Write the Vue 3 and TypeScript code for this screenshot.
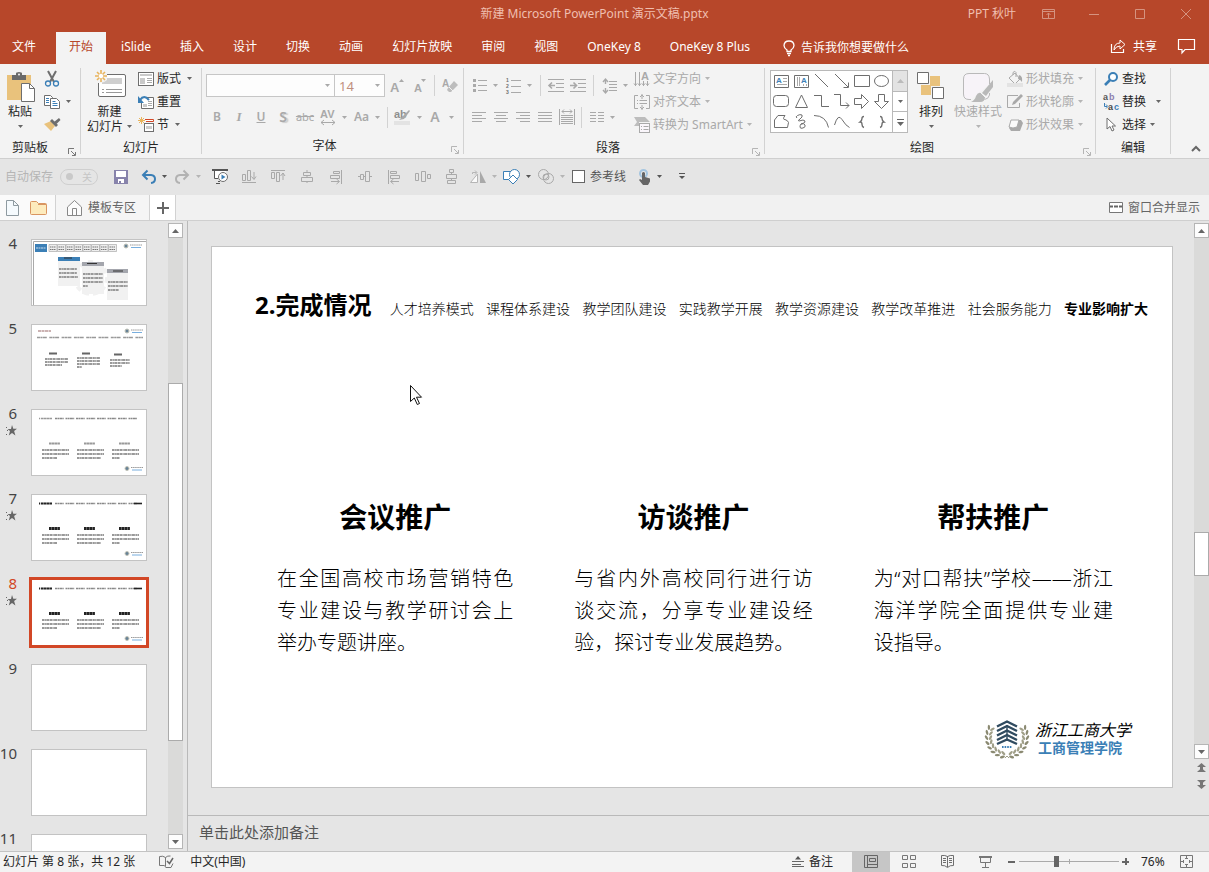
<script setup lang="ts">
import { h, ref } from 'vue'

type IconDef = [number, number, string]

const G = '#a9a9a9'
const D = '#6e6e6e'
const B = '#3b7fb6'

const g = (body: string, color = G) => `<g fill="none" stroke="${color}">${body}</g>`
const letter = (x: number, y: number, size: number, text: string, fill: string) =>
  `<text x="${x}" y="${y}" font-size="${size}" font-weight="600" fill="${fill}" stroke="none" font-family="Liberation Sans, sans-serif">${text}</text>`

// Laurel leaves placed in two rings around the emblem's centre
const laurel = (): string => {
  let out = ''
  for (let i = 0; i < 8; i++) {
    for (const side of [-1, 1]) {
      const a = ((-28 + i * 15) * Math.PI) / 180
      for (const [r, tilt, fill] of [[20.5, 30, '#8b8a72'], [16.5, -30, '#a09f88']] as const) {
        const x = 22 + side * r * Math.cos(a)
        const y = 18 + r * Math.sin(a)
        const rot = side * ((a * 180) / Math.PI + 90 + tilt)
        out += `<ellipse cx="${x.toFixed(1)}" cy="${y.toFixed(1)}" rx="2.600" ry="1.200" fill="${fill}" transform="rotate(${rot.toFixed(0)} ${x.toFixed(1)} ${y.toFixed(1)})"/>`
      }
    }
  }
  return out
}

const icons: Record<string, IconDef> = {
  drop: [5, 3, '<path d="M0 0h5L2.5 3z" fill="currentColor"/>'],
  up: [7, 4, '<path d="M0 4h7L3.5 0z" fill="currentColor"/>'],
  down: [7, 4, '<path d="M0 0h7L3.5 4z" fill="currentColor"/>'],
  more: [7, 7, '<path d="M0 0h7v1H0zM0 3h7L3.5 7z" fill="currentColor"/>'],
  launcher: [8, 8, '<path d="M.5 6V.5H6M3 3l4 4M7.500 4v3.500H4" fill="none" stroke="currentColor"/>'],
  collapse: [10, 6, '<path d="M1 5l4-4 4 4" fill="none" stroke="#666" stroke-width="2"/>'],
  paste: [29, 30, '<path d="M0 3h24v25H0z" fill="#e9c27c"/><path d="M5 3h4V1.500Q9 0 12 0t3 1.500V3h4v5H5z" fill="#6a6a6a"/><circle cx="12" cy="2.500" r="1" fill="#f3f3f3"/><path d="M14.500 11.500h8l5 5v13h-13z" fill="#fff" stroke="#6e6e6e"/><path d="M22.500 11.500v5h5" fill="none" stroke="#6e6e6e"/>'],
  cut: [16, 16, `<path d="M4 0l6 11M12 0L6 11" stroke="${D}" stroke-width="2" fill="none"/><circle cx="4" cy="12.500" r="2.500" fill="none" stroke="${B}" stroke-width="1.300"/><circle cx="12" cy="12.500" r="2.500" fill="none" stroke="${B}" stroke-width="1.300"/>`],
  copy: [16, 14, `<g fill="#fff" stroke="${D}"><path d="M.5.5h6l2 2v8h-8z"/><path d="M6.500 3.500h6l3 3v7h-9z"/></g><path d="M2 3.500h3M2 5.500h3M2 7.500h3M8.500 6.500h3M8.500 8.500h5M8.500 10.500h5" stroke="${B}"/>`],
  brush: [17, 15, `<path d="M0 7l7-3 4 5-4 5z" fill="#e9c27c"/><path d="M6 4l2-2 6 6-2 2z" fill="${D}"/><path d="M10 5l5-4 1.500 2-4 4z" fill="${D}"/>`],
  newslide: [32, 28, `<rect x="4.500" y="4.500" width="27" height="22" rx="1.500" fill="#fff" stroke="${D}"/><path d="M8 8h20v6H8z" fill="#cfcfcf"/><path d="M8 19.500h2M12 19.500h16M8 22.500h2M12 22.500h16" stroke="#999"/><path d="M0 0h13v10q-3 3-7 3H0z" fill="#f3f3f3"/><path d="M7 0v12M1 6h12M3 2l8 8M11 2l-8 8" stroke="#e9b45c" stroke-width="1.600"/><circle cx="7" cy="6" r="2.200" fill="#fff"/>`],
  layout: [16, 14, `<rect x=".5" y=".5" width="15" height="13" fill="#fff" stroke="${D}"/><path d="M2 2h12v2H2zM2 6h5v6H2z" fill="#c9c9c9"/><path d="M9 6.500h5M9 8.500h5M9 10.500h5" stroke="#aaa"/>`],
  reset: [16, 14, `<path d="M3.500 6v7.500h12V2.500H9" fill="#fff" stroke="${D}"/><path d="M5 9h4v3H5z" fill="#c9c9c9"/><path d="M10 6.500h4M10 8.500h4M10 10.500h4" stroke="#aaa"/><path d="M2 5Q6-1 11 5" fill="none" stroke="${B}" stroke-width="2"/><path d="M0 1v7h6z" fill="${B}"/>`],
  section: [16, 15, `<path d="M3.500 0v7M0 3.500h7M1 1l5 5M6 1L1 6" stroke="#e9b45c"/><path d="M7 2.500h8.500v2H8" fill="#fff" stroke="#d24726"/><rect x="6.500" y="6.500" width="9" height="8" fill="#fff" stroke="${D}"/><path d="M8 9h6v3H8z" fill="#ccc"/>`],
  grow: [14, 14, letter(0, 13, 13, 'A', G) + `<path d="M9 3h5l-2.500-3z" fill="${G}"/>`],
  shrink: [12, 14, letter(0, 13, 11, 'A', G) + `<path d="M7 0h5L9.500 3z" fill="${G}"/>`],
  clear: [16, 16, letter(0, 9, 10, 'A', G) + '<path d="M6 10l6-7 4 4-7 7H7l-2-2z" fill="#bdbdbd"/><path d="M7 9l4 4" stroke="#f3f3f3"/>'],
  spacingAV: [16, 16, letter(0, 9, 11, 'AV', G) + g('<path d="M1 13.500h14M4 11l-3 2.500L4 16M12 11l3 2.500-3 2.500"/>')],
  highlight: [17, 16, letter(0, 9, 11, 'ab', '#8f8f8f') + `<path d="M15 1L8 8l-3 3 5-1 6-8z" fill="${G}"/><path d="M0 12h16v4H0z" fill="#e3e3e3"/>`],
  bullets: [14, 15, `<path d="M0 1h3v3H0zM0 6h3v3H0zM0 11h3v3H0z" fill="${G}"/>` + g('<path d="M5 2.500h9M5 7.500h9M5 12.500h9"/>')],
  numbers: [15, 18, letter(0, 5, 5, '1', D) + letter(0, 11, 5, '2', D) + letter(0, 17, 5, '3', D) + g('<path d="M5 3.500h10M5 9.500h10M5 15.500h10"/>')],
  outdent: [16, 14, g('<path d="M0 .5h16M8 4.500h8M8 8.500h8M0 12.500h16"/><path d="M7 6.500H1M4 3.500l-3 3 3 3" stroke-width="1.600"/>')],
  indent: [16, 14, g('<path d="M0 .5h16M8 4.500h8M8 8.500h8M0 12.500h16"/><path d="M0 6.500h6M3.500 3.500l3 3-3 3" stroke-width="1.600"/>')],
  lineheight: [15, 16, g('<path d="M3.500 1v5M1 4l2.500-3L6 4M3.500 10v5M1 12l2.500 3L6 12" stroke-width="1.400"/><path d="M7 3.500h8M7 6.500h8M7 9.500h8M7 12.500h8"/>')],
  left: [14, 11, g('<path d="M0 .5h14M0 3.500h10M0 6.500h14M0 9.500h10"/>')],
  center: [14, 11, g('<path d="M0 .5h14M2 3.500h10M0 6.500h14M2 9.500h10"/>')],
  right: [14, 11, g('<path d="M0 .5h14M4 3.500h10M0 6.500h14M4 9.500h10"/>')],
  justify: [14, 11, g('<path d="M0 .5h14M0 3.500h14M0 6.500h14M0 9.500h14"/>')],
  distribute: [16, 16, g('<path d="M.5 0v16M15.500 0v16M3 2.500h10M5 .5l-2 2 2 2M11 .5l2 2-2 2M2 6.500h12M2 8.500h12M2 10.500h12M2 12.500h12M2 14.500h12"/>')],
  columns: [14, 11, g('<path d="M0 .5h6M0 3.500h6M0 6.500h6M0 9.500h6M8 .5h6M8 3.500h6M8 6.500h6M8 9.500h6"/>')],
  textdir: [16, 16, g('<path d="M1.500 1v14M5.500 1v14M9.500 10v5M13.500 10v5M0 12.500l1.500 2 1.500-2M4 12.500l1.500 2 1.500-2M8 12.500l1.500 2 1.500-2M12 12.500l1.500 2 1.500-2"/>') + letter(7, 9, 11, 'A', G)],
  aligntext: [16, 16, g('<path d="M4 1.500H.5v13H4M12 1.500h3.500v13H12M8 0v5M6 3l2-2 2 2M8 16v-5M6 13l2 2 2-2M3 6.500h1M5.500 6.500H13M3 9.500h1M5.500 9.500H13"/>')],
  smartart: [16, 16, `<path d="M0 0h11l5 5H5V9H0l3-4z" fill="#bdbdbd"/><rect x="5.500" y="6.500" width="10" height="9" fill="#faf6fb" stroke="${G}"/>` + g('<path d="M7 9.500h1M9.500 9.500h5M7 12.500h1M9.500 12.500h5"/>')],
  arrange: [28, 28, `<path d="M13 4h10v10H13zM4 13h10v10H4z" fill="#e9c27c"/><g fill="#fff" stroke="${D}"><path d="M.5.5h11v11H.5zM15.500 15.500h11v11h-11z"/></g>`],
  quick: [30, 31, '<path d="M8 27.500H6Q.5 27.500.5 22V7Q.5 1.500 6 1.500h15.500Q26 1.500 26.500 7v5M26.500 21v2q-1 4-5 4.500" fill="#f7f3f8" stroke="#b9b9b9"/><path d="M30 8v7l-7 9-4-3z" fill="#b9b9b9"/><path d="M18 21l4 4q0 5-5 5H8q4-2 5-6 2-4 5-3z" fill="#b9b9b9"/><path d="M17 20l5 5" stroke="#f3f3f3"/>'],
  fill: [16, 16, g('<path d="M2 7l6-5 5 6-5 5zM6 4V1.500q2-2.500 3 0V6"/>') + `<path d="M12 4q4 1 3 7-2-3-4-3z" fill="${G}"/><path d="M0 12h16v4H0z" fill="#e3e3e3"/>`],
  outline: [16, 15, g('<path d="M11 1.500H.5v12h12V9"/>') + `<path d="M14 0l2 2-8 8-3 1 1-3z" fill="${G}"/>`],
  effect: [16, 14, `<path d="M2 10L5 2h9l2 3-3 8H4z" fill="${G}"/><path d="M2 9l2-7h8l-2 7q-4 2-8 0z" fill="#fafafa" stroke="${G}"/>`],
  find: [15, 14, `<circle cx="9" cy="5" r="4" fill="#fff" stroke="${B}" stroke-width="2"/><path d="M6 8l-5 5" stroke="${B}" stroke-width="2.600"/>`],
  replace: [16, 19, letter(0, 8, 9, 'a', '#555') + letter(6, 8, 9, 'b', '#8c7fae') + letter(5, 18, 9, 'a', '#444') + letter(11, 18, 9, 'c', B) + `<path d="M1.500 11v3.500H4M3 12.500l2 2-2 2" stroke="${B}" fill="none"/>`],
  select: [10, 15, `<path d="M1 1v11l3-2.500 2 4.500 2-1-2-4h3.500z" fill="#fff" stroke="${D}"/>`],
  bulb: [12, 16, '<g fill="none" stroke="#fff" stroke-width="1.300"><path d="M4 11.500V10Q1 8 1 5.500 1.200 1 6 1t5 4.500Q11 8 8 10v1.500z"/><path d="M4 13.500h4M5 15.500h2"/></g>'],
  share: [16, 15, '<path d="M1.500 5v8.500h12V10" fill="none" stroke="#fff" stroke-width="1.200"/><path d="M4 11q0-7 6-7V1l5 4.500L10 10V7Q6 7 4 11z" fill="none" stroke="#fff"/>'],
  comment: [17, 15, '<path d="M.5.5h16v10H7l-3 3.500v-3.500H.5z" fill="none" stroke="#fff" stroke-width="1.200"/>'],
  ribbonopt: [13, 10, '<path d="M.5.5h12v9H.5zM.5 2.500h12M6.500 9V4M4.500 6l2-2 2 2" fill="none" stroke="#d59380"/>'],
  min: [10, 10, '<path d="M0 5.500h10" stroke="#d59380"/>'],
  max: [10, 10, '<path d="M.5.5h9v9h-9z" fill="none" stroke="#d59380"/>'],
  close: [10, 10, '<path d="M0 0l10 10M10 0L0 10" stroke="#d59380"/>'],
  save: [14, 14, '<path d="M0 0h14v14H0z" fill="#8783ab"/><path d="M2 1h10v6H2zM4 9h6v4H4z" fill="#fff"/><path d="M5 11h2v2H5z" fill="#8783ab"/>'],
  undo: [15, 14, `<path d="M2 5h8q4 .5 4 4t-4 4" fill="none" stroke="${B}" stroke-width="2"/><path d="M6.500.5L2 5l4.500 4.500" fill="none" stroke="${B}" stroke-width="2"/>`],
  redo: [15, 14, '<path d="M13 5H5Q1 5.500 1 9t4 4" fill="none" stroke="#b2b2b2" stroke-width="2"/><path d="M8.500.5L13 5 8.500 9.500" fill="none" stroke="#b2b2b2" stroke-width="2"/>'],
  play: [16, 15, `<path d="M0 0h16v2H0z" fill="#555"/><path d="M2.500 2v7.500H6M6 12.500h2M4 14.500h4" stroke="#555" fill="none"/><path d="M3 2h11v7H3z" fill="#fff"/><circle cx="11" cy="8" r="4.500" fill="#fff" stroke="${D}"/><path d="M9.500 5.500L13.500 8l-4 2.500z" fill="${B}"/>`],
  q1: [14, 13, g('<path d="M.5 4.500h3v6h-3zM5.500.5h3v10h-3zM0 12.500h14M12 2v7M9.500 6.500L12 9.500l2-3"/>')],
  q2: [14, 13, g('<path d="M0 .5h14M.5 2.500h3v6h-3zM5.500 2.500h3v9h-3zM12 10V3M9.500 6L12 3l2 3"/>')],
  q3: [12, 13, g('<path d="M6 0v2M2.500 2.500h7v3h-7zM6 6v2M.5 7.500h11v4H.5zM6 12v1"/>')],
  q4: [12, 14, g('<path d="M11.500 0v14M3.500 1.500h6v2h-6zM.5 5.500h9v3h-9zM1 11.500h8M6.500 9l3 2.500-3 2.500"/>')],
  q5: [14, 12, g('<path d="M0 5.500h2M2.500 3.500h3v5h-3zM6 5.500h1M7.500.5h4v10h-4zM12 5.500h2"/>')],
  q6: [12, 14, g('<path d="M.5 0v14M2.500 1.500h6v2h-6zM2.500 5.500h9v3h-9zM3 11.500h8M5.500 9l-3 2.500 3 2.500"/>')],
  q7: [16, 12, g('<path d="M.5 2.500h3v7h-3zM6.500.5h4v10h-4zM12.500 3.500h3v4h-3z"/>')],
  q8: [11, 15, g('<path d="M3.500.5h4v3h-4zM5.500 4v1M.5 5.500h10v4H.5zM5.500 10v1M1.500 11.500h8v3h-8z"/>')],
  flip: [16, 13, `<path d="M7.500 4v8.500h-7z" fill="#fafafa" stroke="#b5b5b5"/><path d="M2.500 4V2.500h4M5 .5l2 2-2 2" fill="none" stroke="#b5b5b5"/><path d="M10 1l6 12h-6z" fill="${G}"/>`],
  shapes: [17, 15, `<path d="M.5 2.500h11v8H.5z" fill="#fff" stroke="${B}"/><circle cx="11.500" cy="5.500" r="5" fill="#fff" stroke="${B}"/><path d="M10 6l4.500 4.500L10 15l-4.500-4.500z" fill="#fff" stroke="${B}"/>`],
  merge: [16, 15, g('<circle cx="5.500" cy="5.500" r="5"/><circle cx="10.500" cy="9.500" r="5"/><circle cx="8" cy="8" r="3"/>')],
  touch: [13, 16, `<circle cx="5.500" cy="4.500" r="3.500" fill="none" stroke="#a4c5e0" stroke-width="2"/><path d="M4 4q1.500-2 3 0v4l5 1.500v3L10 16H5l-4-5 1-1 2 1z" fill="#666"/>`],
  custom: [7, 7, '<path d="M1 .5h6" stroke="#555"/><path d="M1 3h6L4 6z" fill="#555"/>'],
  file: [13, 16, '<path d="M.5.5h7l5 5v10H.5z" fill="#f5fafd" stroke="#8e9aa0"/><path d="M7.500.5v5h5" fill="none" stroke="#8e9aa0"/>'],
  folder: [17, 14, '<path d="M1.500.5h5l2 2h7q1 0 1 1v9q0 1-1 1h-14q-1 0-1-1v-11q0-1 1-1z" fill="#fdebbd" stroke="#d99561"/><path d="M8 3.500h8" stroke="#d99561"/>'],
  home: [15, 16, '<path d="M.5 7L7.500.5l7 6.500v8.500H.5z" fill="#fcfcfc" stroke="#888"/><path d="M5.500 15.500v-7h4v7" fill="none" stroke="#888"/>'],
  plus: [12, 12, '<path d="M6 0v12M0 6h12" stroke="#666" stroke-width="2"/>'],
  windows: [14, 11, '<path d="M.5.5h13v10H.5z" fill="#fff" stroke="#777"/><path d="M1 4.500h3M5 4.500h4M10 4.500h3" stroke="#666" stroke-width="2"/>'],
  star: [11, 11, '<path d="M6 0l1.300 3.700H11L8.100 6l1.300 4.500L6 8 2.800 10.500 4 6 1.500 4H5z" fill="#666"/><path d="M0 2h1v1H0zM1 5h1v1H1zM0 9h1v1H0z" fill="#666"/>'],
  spell: [15, 13, '<path d="M6.500 11.500v-9Q4 .5.5 1.500v9H5zM6.500 2.500q2-2 5-1.500M6.500 12.500H12l2-4" fill="none" stroke="#777"/><path d="M8 6l2.500 2.500L14 3" fill="none" stroke="#666" stroke-width="1.500"/>'],
  notes: [12, 11, '<path d="M3 3.500h6L6 0z" fill="#555"/><path d="M0 5.500h12M0 8.500h9M0 10.500h12" stroke="#666"/>'],
  normal: [15, 13, '<path d="M.5.5h13v12H.5zM3.500 0v12M5.500 3.500h6v3h-6zM3.500 9.500h10" fill="none" stroke="#666"/>'],
  sorter: [15, 13, '<path d="M.5.5h5v4h-5zM8.500.5h5v4h-5zM.5 8.500h5v4h-5zM8.500 8.500h5v4h-5z" fill="none" stroke="#777"/>'],
  book: [13, 13, '<path d="M.5.500Q4 0 6.500 1.500 9 0 12.500.5v10Q9 10 6.500 12.500 4 10 .5 10.500zM6.500 1v11M2 3.500h3M2 5.500h3M2 7.500h3M8 3.500h3M8 5.500h3M8 7.500h3" fill="none" stroke="#6e6e6e"/>'],
  show: [13, 12, '<path d="M0 0h13v2H0z" fill="#777"/><path d="M1.500 1v5.500h10V1M6.500 7v4M3 11.500h7" fill="none" stroke="#777"/>'],
  fit: [13, 13, '<path d="M.5.5h12v12H.5zM6.500 1v3M6.500 9v3M1 6.500h3M9 6.500h3M5 3.500h3M5 9.500h3M3.500 5v3M9.500 5v3" fill="none" stroke="#777"/>'],
  prev: [9, 9, '<path d="M0 4h9L4.500 0zM0 9h9L4.500 5z" fill="#777"/><path d="M3 3h3v6H3z" fill="#777"/>'],
  next: [9, 9, '<path d="M0 0h9L4.500 4zM0 5h9L4.500 9z" fill="#777"/><path d="M3 0h3v6H3z" fill="#777"/>'],
  cursor: [12, 20, '<path d="M.5.5v16l3.800-3.500 3 6.500 2.200-1-3-6.300h5z" fill="#fff" stroke="#111"/>'],
  emblem: [44, 40, `${laurel()}<g stroke="#304b60" fill="none" stroke-width="2.400"><path d="M12 7.500l10-5 10 5M12 12l10-5 10 5M12 16.500l10-5 10 5M12 21l10-5 10 5M12 25l10-4.500L32 25"/></g><path d="M22 6v16" stroke="#304b60" stroke-width="1.400"/><path d="M17 28h10" stroke="${B}" stroke-width="2" stroke-dasharray="1.600 1"/><path d="M20 39l2-2 2 2" stroke="#a09f88" fill="none"/>`],
  // shape gallery
  s0: [15, 13, `<path d="M.5.5h14v12H.5z" fill="#fff" stroke="${D}"/><path d="M9 3.500h4M9 6.500h4M3 9.500h10" stroke="#aaa"/>` + letter(2, 8, 8, 'A', B)],
  s1: [15, 13, `<path d="M.5.5h14v12H.5z" fill="#fff" stroke="${D}"/><path d="M3.500 2v9M5.500 2v9M9.500 9v2M12.500 9v2" stroke="#aaa"/>` + letter(7, 8, 8, 'A', B)],
  s2: [15, 14, g('<path d="M1 0l13 13"/>', D)],
  s3: [15, 14, g('<path d="M1 0l13 13M9.500 13.500h5v-5"/>', D)],
  s4: [16, 12, g('<path d="M.5.5h15v11H.5z"/>', D)],
  s5: [15, 12, g('<ellipse cx="7.500" cy="6" rx="7" ry="5.500"/>', D)],
  s6: [16, 12, g('<rect x=".5" y=".5" width="15" height="11" rx="3"/>', D)],
  s7: [13, 14, g('<path d="M6.500 1L12.500 13.500H.5z"/>', D)],
  s8: [15, 12, g('<path d="M0 .5h7.500v11H15"/>', D)],
  s9: [16, 14, g('<path d="M0 .5h6.500v11H15M12 8.500l3 3-3 3"/>', D)],
  s10: [15, 15, g('<path d="M.5 4.500h7v-4l7 7-7 7v-4h-7z"/>', D)],
  s11: [15, 15, g('<path d="M4.500.5v7h-4l7 7 7-7h-4v-7z"/>', D)],
  s12: [15, 13, g('<path d="M.5 12.500V5L4 .5h7q-3 4 0 4 3 1 3.500 3l-1 5z"/>', D)],
  s13: [12, 15, g('<path d="M2 4Q0 3 2.500 1.500T7 1Q8 3 5 5T4 7q5-2 6 0T6 10q3-1 4 1t-2 3-3-1 1-3"/>', D)],
  s14: [15, 13, g('<path d="M0 .5q12 0 14.500 12"/>', D)],
  s15: [16, 12, g('<path d="M.5 9Q4-3 8 3.500t7.500 8"/>', D)],
  s16: [6, 12, g('<path d="M5 .5Q3 .5 3 2.500T1 6q2 0 2 2.500T5 11.500" stroke-width="1.400"/>', D)],
  s17: [6, 12, g('<path d="M1 .5q2 0 2 2T5 6Q3 6 3 8.500T1 11.500" stroke-width="1.400"/>', D)],
}

const Ico = (props: { n: string }) => {
  const [w, hgt, body] = icons[props.n]
  return h('svg', { width: w, height: hgt, viewBox: `0 0 ${w} ${hgt}`, 'aria-hidden': 'true', innerHTML: body })
}
Ico.props = ['n']

const tabs = ['文件', '开始', 'iSlide', '插入', '设计', '切换', '动画', '幻灯片放映', '审阅', '视图', 'OneKey 8', 'OneKey 8 Plus']
const activeTab = ref('开始')
const shapeCount = 18
const alignTools = ['q1', 'q2', 'q3', 'q4', 'q5', 'q6', 'q7', 'q8']
const guides = ref(false)
const autosave = ref(false)
const zoom = ref(37)

const navItems = ['人才培养模式', '课程体系建设', '教学团队建设', '实践教学开展', '教学资源建设', '教学改革推进', '社会服务能力', '专业影响扩大']
const columns = [
  { title: '会议推广', body: '在全国高校市场营销特色专业建设与教学研讨会上举办专题讲座。' },
  { title: '访谈推广', body: '与省内外高校同行进行访谈交流，分享专业建设经验，探讨专业发展趋势。' },
  { title: '帮扶推广', body: '为“对口帮扶”学校——浙江海洋学院全面提供专业建设指导。' },
]

type Slide = { no: number; kind: 'cards' | 'topnav' | 'light' | 'bold' | 'blank'; star?: boolean }
const slides: Slide[] = [
  { no: 4, kind: 'cards' },
  { no: 5, kind: 'topnav' },
  { no: 6, kind: 'light', star: true },
  { no: 7, kind: 'bold', star: true },
  { no: 8, kind: 'bold', star: true },
  { no: 9, kind: 'blank' },
  { no: 10, kind: 'blank' },
  { no: 11, kind: 'blank' },
]
const current = ref(8)

const para = (x: number, y: number, w: number, rows: number, last: number, step = 4) =>
  Array.from({ length: rows }, (_, i) =>
    `<path d="M${x} ${y + i * step}h${i === rows - 1 ? last : w}" stroke="#999" stroke-width="1.800" stroke-dasharray="2.200 .4 1.300 .4 3 .5"/>`).join('')
const miniLogo = (x: number, y: number) =>
  `<circle cx="${x}" cy="${y}" r="2" fill="#668296" stroke="#c4c4b8"/><path d="M${x + 4} ${y - 1}h12" stroke="#999" stroke-dasharray="1.500 .6"/><path d="M${x + 5} ${y + 1.5}h10" stroke="#78aede"/>`
const miniNav = (y: number) =>
  `<path d="M23 ${y}h82" stroke="#888" stroke-width="1.400" stroke-dasharray="2 .4 1.600 .4 3 .3 1 1.800"/>`

const thumbArt = (kind: Slide['kind']): string => {
  if (kind === 'cards') {
    const boxes = Array.from({ length: 8 }, (_, i) =>
      `<path d="M${17 + i * 8.5} 4.500h8v7h-8z" fill="#eee" stroke="#aaa" stroke-width=".7"/><path d="M${18 + i * 8.5} 7h6M${18 + i * 8.5} 9.500h6" stroke="#777" stroke-dasharray="1.500 .5"/>`).join('')
    return `<path d="M1.500 65V1.500H114" fill="none" stroke="#aaa"/><path d="M3 4h12v8H3z" fill="#3b7fb6"/><path d="M4 8h10" stroke="#cde" stroke-dasharray="2 .5"/>${boxes}${miniLogo(94, 6)}
      <circle cx="59" cy="38" r="16" fill="none" stroke="#f1f1f1" stroke-width="4" stroke-dasharray="5 4"/>
      <path d="M26 20h22v26H26zM50 26h22v28H50zM75 33h21v27H75z" fill="#f1f1f1"/>
      <path d="M26 17h22v4H26z" fill="#3b7fb6"/><path d="M50 22h22v4H50zM75 29h21v4H75z" fill="#a4a6ad"/>
      <path d="M32 18h8M55 23.500h10M81 31h10" stroke="#333"/>` + para(27, 29, 18, 3, 19) + para(51, 34, 20, 4, 5) + para(76, 42, 20, 3, 11)
  }
  if (kind === 'topnav') {
    return `<path d="M6 6h13" stroke="#b99" stroke-width="1.500" stroke-dasharray="3 .5"/>${miniLogo(95, 6)}<path d="M5 12.500h106" stroke="#999" stroke-width="1.400" stroke-dasharray="3 .4 2 .4 4 2.500"/>
      <path d="M17 28.500h8M50 28.500h8M82 29.500h8" stroke="#666" stroke-width="1.800"/>` + para(13, 34, 23, 3, 17, 3) + para(45, 33, 23, 4, 5, 3) + para(78, 35, 20, 3, 12, 3)
  }
  if (kind === 'blank') return ''
  const ink = kind === 'bold' ? '#222' : '#999'
  const sw = kind === 'bold' ? 3 : 1.8
  return `<path d="M7 8.500h13" stroke="${ink}" stroke-width="${kind === 'bold' ? 2.2 : 1.4}" stroke-dasharray="1 .8 2.600 .3 2.600 .3 2.600 .3 2.600"/>${miniNav(8.5)}
    <path d="M17 33.500h11M52 33.500h11M87 33.500h11" stroke="${ink}" stroke-width="${sw}" stroke-dasharray="2.500 .3"/>` +
    (kind === 'bold' ? '<path d="M102 8.500h8" stroke="#222" stroke-width="1.600"/>' : '') +
    para(10, 40, 27, 3, 15) + para(45, 40, 27, 3, 24) + para(80, 40, 27, 3, 8) + miniLogo(95, 58.5)
}
</script>

<template>
  <div class="app">
    <header class="head">
      <div class="titlebar">
        <span></span>
        <span class="doc">新建 Microsoft PowerPoint 演示文稿.pptx</span>
        <div class="win">
          <span class="user">PPT 秋叶</span>
          <button v-for="n in ['ribbonopt', 'min', 'max', 'close']" :key="n" :aria-label="n"><Ico :n="n" /></button>
        </div>
      </div>
      <nav class="tabs">
        <button v-for="t in tabs" :key="t" class="tab" :class="{ on: t === activeTab }" @click="activeTab = t">{{ t }}</button>
        <button class="tell"><Ico n="bulb" />告诉我你想要做什么</button>
        <button class="share"><Ico n="share" />共享</button>
        <button class="comment" aria-label="批注"><Ico n="comment" /></button>
      </nav>
    </header>

    <section class="ribbon">
      <div class="group clip">
        <div class="body">
          <button class="big"><span class="pic"><Ico n="paste" /></span><span>粘贴</span><span class="ln"><Ico n="drop" /></span></button>
          <div class="stack">
            <button class="sm" aria-label="剪切"><Ico n="cut" /></button>
            <button class="sm" aria-label="复制"><Ico n="copy" /><Ico n="drop" class="dd" /></button>
            <button class="sm" aria-label="格式刷"><Ico n="brush" /></button>
          </div>
        </div>
        <div class="label"><span>剪贴板</span><button aria-label="剪贴板选项"><Ico n="launcher" /></button></div>
      </div>

      <div class="group slidesg">
        <div class="body">
          <button class="big"><span class="pic"><Ico n="newslide" /></span><span>新建</span><span class="ln">幻灯片<Ico n="drop" /></span></button>
          <div class="stack">
            <button class="sm"><Ico n="layout" />版式<Ico n="drop" class="dd" /></button>
            <button class="sm"><Ico n="reset" />重置</button>
            <button class="sm"><Ico n="section" />节<Ico n="drop" class="dd" /></button>
          </div>
        </div>
        <div class="label"><span>幻灯片</span></div>
      </div>

      <div class="group fontg off">
        <div class="body rows">
          <div class="row">
            <label class="combo wide"><select aria-label="字体"><option></option></select><Ico n="drop" /></label>
            <label class="combo"><select aria-label="字号"><option>14</option></select><Ico n="drop" /></label>
            <button class="tool" aria-label="增大字号"><Ico n="grow" /></button>
            <button class="tool" aria-label="减小字号"><Ico n="shrink" /></button>
            <i class="sep"></i>
            <button class="tool" aria-label="清除格式"><Ico n="clear" /></button>
          </div>
          <div class="row">
            <button class="tool b">B</button>
            <button class="tool i">I</button>
            <button class="tool u">U</button>
            <button class="tool s">S</button>
            <button class="tool k">abc</button>
            <button class="tool dropw" aria-label="字符间距"><Ico n="spacingAV" /><Ico n="drop" /></button>
            <button class="tool dropw aa">Aa<Ico n="drop" /></button>
            <i class="sep"></i>
            <button class="tool dropw" aria-label="突出显示"><Ico n="highlight" /><Ico n="drop" /></button>
            <button class="tool dropw fc">A<Ico n="drop" /></button>
          </div>
        </div>
        <div class="label"><span>字体</span><button aria-label="字体选项"><Ico n="launcher" /></button></div>
      </div>

      <div class="group parag off">
        <div class="body">
          <div class="rows">
            <div class="row">
              <button class="tool dropw" aria-label="项目符号"><Ico n="bullets" /><Ico n="drop" /></button>
              <button class="tool dropw" aria-label="编号"><Ico n="numbers" /><Ico n="drop" /></button>
              <i class="sep"></i>
              <button class="tool" aria-label="减少缩进"><Ico n="outdent" /></button>
              <button class="tool" aria-label="增加缩进"><Ico n="indent" /></button>
              <i class="sep"></i>
              <button class="tool dropw" aria-label="行距"><Ico n="lineheight" /><Ico n="drop" /></button>
            </div>
            <div class="row">
              <button v-for="n in ['left', 'center', 'right', 'justify', 'distribute']" :key="n" class="tool" :aria-label="n"><Ico :n="n" /></button>
              <i class="sep"></i>
              <button class="tool dropw" aria-label="分栏"><Ico n="columns" /><Ico n="drop" /></button>
            </div>
          </div>
          <div class="stack tight">
            <button class="sm"><Ico n="textdir" />文字方向<Ico n="drop" class="dd" /></button>
            <button class="sm"><Ico n="aligntext" />对齐文本<Ico n="drop" class="dd" /></button>
            <button class="sm"><Ico n="smartart" />转换为 SmartArt<Ico n="drop" class="dd" /></button>
          </div>
        </div>
        <div class="label"><span>段落</span><button aria-label="段落选项"><Ico n="launcher" /></button></div>
      </div>

      <div class="group drawg">
        <div class="body">
          <div class="gallery">
            <div class="cells">
              <button v-for="i in shapeCount" :key="i" :aria-label="'形状 ' + i"><Ico :n="'s' + (i - 1)" /></button>
            </div>
            <div class="gscroll">
              <button class="dim" aria-label="上一行"><Ico n="up" /></button>
              <button aria-label="下一行"><Ico n="drop" /></button>
              <button aria-label="其他"><Ico n="more" /></button>
            </div>
          </div>
          <button class="big arr"><span class="pic"><Ico n="arrange" /></span><span>排列</span><span class="ln"><Ico n="drop" /></span></button>
          <button class="big qs off"><span class="pic"><Ico n="quick" /></span><span>快速样式</span><span class="ln"><Ico n="drop" /></span></button>
          <div class="stack tight off">
            <button class="sm"><Ico n="fill" />形状填充<Ico n="drop" class="dd" /></button>
            <button class="sm"><Ico n="outline" />形状轮廓<Ico n="drop" class="dd" /></button>
            <button class="sm"><Ico n="effect" />形状效果<Ico n="drop" class="dd" /></button>
          </div>
        </div>
        <div class="label off-l"><span>绘图</span><button aria-label="绘图选项"><Ico n="launcher" /></button></div>
      </div>

      <div class="group editg">
        <div class="body">
          <div class="stack tight">
            <button class="sm"><span class="slot"><Ico n="find" /></span>查找</button>
            <button class="sm far"><span class="slot"><Ico n="replace" /></span>替换<Ico n="drop" class="dd" /></button>
            <button class="sm"><span class="slot"><Ico n="select" /></span>选择<Ico n="drop" class="dd" /></button>
          </div>
        </div>
        <div class="label"><span>编辑</span></div>
      </div>
      <button class="collapse" aria-label="折叠功能区"><Ico n="collapse" /></button>
    </section>

    <section class="qat">
      <label class="auto">自动保存<input v-model="autosave" type="checkbox" /><span class="switch"><i></i>关</span></label>
      <button class="q save" aria-label="保存"><Ico n="save" /></button>
      <button class="q d" aria-label="撤消"><Ico n="undo" /><Ico n="drop" /></button>
      <button class="q d dim" aria-label="恢复"><Ico n="redo" /><Ico n="drop" /></button>
      <button class="q" aria-label="从头开始放映"><Ico n="play" /></button>
      <button v-for="n in alignTools" :key="n" class="q" :aria-label="n"><Ico :n="n" /></button>
      <button class="q d dim" aria-label="旋转"><Ico n="flip" /><Ico n="drop" /></button>
      <button class="q d" aria-label="形状"><Ico n="shapes" /><Ico n="drop" /></button>
      <button class="q d dim" aria-label="合并形状"><Ico n="merge" /><Ico n="drop" /></button>
      <label class="guide"><input v-model="guides" type="checkbox" />参考线</label>
      <button class="q d" aria-label="触摸模式"><Ico n="touch" /><Ico n="drop" /></button>
      <button class="q" aria-label="自定义"><Ico n="custom" /></button>
    </section>

    <section class="doctabs">
      <div class="cell files">
        <button aria-label="新建文件"><Ico n="file" /></button>
        <button aria-label="打开"><Ico n="folder" /></button>
      </div>
      <button class="cell home"><Ico n="home" />模板专区</button>
      <button class="cell add" aria-label="新建标签"><Ico n="plus" /></button>
      <button class="merge"><Ico n="windows" />窗口合并显示</button>
    </section>

    <main class="main">
      <aside class="panel">
        <ol class="thumbs">
          <li v-for="s in slides" :key="s.no" :class="{ cur: s.no === current }" @click="current = s.no">
            <div class="num"><span>{{ s.no }}</span><Ico v-if="s.star" n="star" /></div>
            <svg class="art" viewBox="0 0 114 65" preserveAspectRatio="none" v-html="thumbArt(s.kind)"></svg>
          </li>
        </ol>
        <div class="bar lbar">
          <button aria-label="向上滚动"><Ico n="up" /></button>
          <span class="gap g1"></span><span class="knob"></span><span class="gap g2"></span>
          <button aria-label="向下滚动"><Ico n="down" /></button>
        </div>
      </aside>

      <div class="editor">
        <div class="work">
          <div class="canvas">
            <article class="slide">
              <header class="shead">
                <h1>2.完成情况</h1>
                <span v-for="(n, i) in navItems" :key="n" :class="{ act: i === 7 }">{{ n }}</span>
              </header>
              <div class="cols">
                <section v-for="c in columns" :key="c.title">
                  <h2>{{ c.title }}</h2>
                  <p>{{ c.body }}</p>
                </section>
              </div>
              <footer class="logo">
                <Ico n="emblem" />
                <div><span class="uni">浙江工商大学</span><span class="school">工商管理学院</span></div>
              </footer>
            </article>
            <Ico n="cursor" class="pointer" />
          </div>
          <div class="bar rbar">
            <button aria-label="向上滚动"><Ico n="up" /></button>
            <span class="gap g1"></span><span class="knob"></span><span class="gap g2"></span>
            <button aria-label="向下滚动"><Ico n="down" /></button>
            <button class="jump" aria-label="上一张幻灯片"><Ico n="prev" /></button>
            <button class="jump" aria-label="下一张幻灯片"><Ico n="next" /></button>
          </div>
        </div>
        <input class="notes" type="text" aria-label="备注" placeholder="单击此处添加备注" />
      </div>
    </main>

    <footer class="status">
      <span class="count">幻灯片 第 8 张，共 12 张</span>
      <button class="spell" aria-label="拼写检查"><Ico n="spell" /></button>
      <span>中文(中国)</span>
      <button class="nbtn"><Ico n="notes" />备注</button>
      <button class="view on" aria-label="普通视图"><Ico n="normal" /></button>
      <button class="view" aria-label="幻灯片浏览"><Ico n="sorter" /></button>
      <button class="view" aria-label="阅读视图"><Ico n="book" /></button>
      <button class="view" aria-label="幻灯片放映"><Ico n="show" /></button>
      <button class="pm minus" aria-label="缩小"></button>
      <input v-model="zoom" class="range" type="range" min="0" max="100" aria-label="缩放" />
      <button class="pm plusb" aria-label="放大"></button>
      <span class="pct">76%</span>
      <button class="fit" aria-label="适应窗口"><Ico n="fit" /></button>
    </footer>
  </div>
</template>

<style>
html, body { margin: 0; }
body { overflow: hidden; }
</style>

<style scoped>
.app {
  display: flex;
  flex-direction: column;
  height: 100vh;
  background: #e5e5e5;
  color: #262626;
  font: 12px/16px "Noto Sans", "Noto Sans CJK SC", sans-serif;
}
.app * { box-sizing: border-box; }
button {
  display: flex;
  align-items: center;
  padding: 0;
  border: 0;
  background: none;
  color: inherit;
  font: inherit;
  white-space: nowrap;
}
svg { flex: none; display: block; overflow: visible; }

.head { background: #b7472a; color: #fff; }
.titlebar { display: grid; grid-template-columns: 1fr auto 1fr; align-items: center; height: 28px; color: #f0bfb0; }
.doc { padding-right: 20px; }
.win { display: flex; justify-content: flex-end; align-items: center; }
.win .user { padding-right: 9px; }
.win button { width: 46px; height: 28px; justify-content: center; }
.tabs { display: flex; gap: 1px; height: 36px; padding-top: 4px; }
.tab { height: 32px; padding: 0 14px 2px; }
.tab:first-child { padding-left: 12px; margin-right: 5px; }
.tab.on { padding: 0 13px 2px; background: #f3f3f3; color: #b7472a; }
.tell { gap: 6px; padding-left: 18px; }
.share { gap: 7px; margin-left: auto; padding-bottom: 3px; }
.comment { margin: 0 14px 0 20px; padding-bottom: 3px; }

.ribbon { display: flex; height: 95px; background: #f3f3f3; border-bottom: 1px solid #cfcfcf; padding: 3px 0 4px; }
.group { display: flex; flex-direction: column; border-right: 1px solid #d2d2d2; margin-top: 1px; }
.clip { width: 81px; }
.slidesg { width: 121px; }
.fontg { width: 262px; }
.parag { width: 301px; }
.drawg { width: 331px; }
.editg { width: 75px; }
.body { display: flex; height: 68px; }
.label { display: flex; align-items: center; flex: 1; color: #262626; }
.label span { flex: 1; text-align: center; padding-top: 4px; }
.label button { width: 12px; align-self: flex-end; height: 8px; color: #777; }
.clip .label span { padding-right: 8px; }
.fontg .label span, .drawg .label span { padding-right: 4px; }
.off { color: #a9a9a9; }
.off .label button, .off-l button { color: #b5b5b5; }
.big { flex-direction: column; align-items: center; line-height: 15px; }
.big .pic { height: 36px; padding-top: 2px; }
.big .ln { display: flex; align-items: center; gap: 4px; height: 15px; }
.clip .big { width: 30px; margin-left: 5px; }
.clip .big .pic { padding: 4px 0 0 3px; }
.slidesg .big { width: 47px; margin: 0 5px; }
.stack { display: flex; flex-direction: column; margin-top: -1px; }
.clip .stack { margin-left: 9px; }
.sm { height: 23px; gap: 3px; }
.sm .dd { margin-left: 3px; }
.tight .dd { margin-left: 1px; }
.far .dd { margin-left: 7px; }
.big .ln svg, .sm .dd { color: #666; }
.off .ln svg, .off .dd, .off.big .ln svg { color: #b5b5b5; }

.rows { display: flex; flex-direction: column; }
.row { display: flex; align-items: center; height: 28px; padding-left: 4px; }
.row:first-child { height: 35px; }
.combo { display: flex; align-items: center; width: 51px; height: 23px; margin-left: -1px; padding: 0 4px; border: 1px solid #c6c6c6; background: #fdfdfd; }
.combo.wide { width: 129px; margin-left: 0; }
.combo select { flex: 1; min-width: 0; appearance: none; border: 0; padding: 0; background: none; color: #c08f7d; font-family: inherit; font-size: 13px; outline: 0; }
.tool { width: 22px; height: 22px; justify-content: center; }
.dropw { width: 34px; gap: 6px; }
.sep { width: 1px; height: 21px; background: #d2d2d2; margin: 0 3px; }
.fontg .row:first-child .tool { width: 23px; }
.fontg .row:first-child .sep { margin: 0 3px; }
.b, .u, .s, .fc, .aa { font-weight: 600; }
.row .i { font: italic 600 13px "Liberation Serif", serif; }
.u { text-decoration: underline; }
.s { font-size: 14px; text-shadow: 2px 1px 1px #ccc; }
.k { text-decoration: line-through; font-size: 11px; }
.row .fc { font-size: 14px; gap: 9px; }
.parag .row { width: 170px; }
.parag .row:first-child .sep { margin: 0 4px; }

.drawg .body { padding-left: 5px; }
.gallery { display: flex; width: 138px; height: 63px; margin-top: 2px; border: 1px solid #b9b9b9; background: #fff; }
.cells { flex: 1; display: grid; grid-template-columns: repeat(6, 1fr); grid-template-rows: repeat(3, 1fr); }
.cells button { justify-content: center; }
.gscroll { width: 15px; display: flex; flex-direction: column; border-left: 1px solid #b9b9b9; }
.gscroll button { flex: 1; justify-content: center; color: #666; }
.gscroll button + button { border-top: 1px solid #b9b9b9; }
.gscroll .dim { background: #e3e3e3; color: #bbb; }
.arr { width: 36px; margin-left: 5px; }
.arr .pic, .qs .pic { padding-top: 4px; }
.qs { width: 50px; margin: 0 4px 0 4px; }
.editg .stack { margin-left: 7px; }
.slot { display: flex; justify-content: center; width: 16px; }
.collapse { margin: auto 8px 2px auto; }

.qat { display: flex; align-items: center; height: 36px; padding-bottom: 1px; }
.auto { position: relative; display: flex; align-items: center; gap: 7px; padding-left: 5px; width: 106px; color: #b5b5b5; }
.auto input { position: absolute; opacity: 0; }
.switch { display: flex; align-items: center; justify-content: space-between; width: 38px; height: 16px; padding: 0 5px; border: 1px solid #cfcfcf; border-radius: 8px; font-size: 10px; color: #c5c5c5; }
.switch i { width: 7px; height: 7px; border-radius: 50%; background: #c9c9c9; }
.q { width: 29px; height: 24px; justify-content: center; color: #555; }
.q.d { width: 34px; gap: 6px; }
.q.dim { color: #b5b5b5; }
.save { margin-right: 2px; }
.guide { display: flex; align-items: center; gap: 5px; padding: 0 7px 0 4px; color: #555; }
.guide input { appearance: none; width: 13px; height: 13px; margin: 0; border: 1px solid #666; background: #fff; }

.doctabs { display: flex; height: 26px; background: #f1f1f1; border-bottom: 1px solid #cfcfcf; color: #666; }
.cell { display: flex; align-items: center; border-right: 1px solid #d2d2d2; background: #fafafa; }
.files { width: 56px; padding-left: 6px; gap: 11px; }
.home { width: 94px; padding-left: 11px; gap: 6px; background: #f5f5f5; }
.add { width: 26px; justify-content: center; background: #fff; }
.doctabs .merge { margin: 0 9px 0 auto; gap: 5px; }

.main { flex: 1; min-height: 0; display: flex; }
.panel { display: flex; width: 188px; padding-right: 4px; border-right: 1px solid #b9b9b9; }
.thumbs { flex: 1; margin: 0; padding: 18px 0 0; list-style: none; overflow: hidden; }
.thumbs li { display: flex; height: 67px; margin-bottom: 18px; }
.num { width: 31px; padding-right: 14px; display: flex; flex-direction: column; align-items: flex-end; gap: 2px; font-size: 15px; line-height: 20px; color: #444; margin-top: -6px; }
.num span { white-space: nowrap; }
.cur .num { color: #d24726; }
.art { width: 116px; height: 67px; border: 1px solid #c3c3c3; background: #fff; overflow: hidden; }
.cur .art { outline: 3px solid #d24726; outline-offset: -1px; border-color: #d24726; }
.bar { display: flex; flex-direction: column; width: 15px; padding-top: 2px; }
.bar button { width: 15px; height: 15px; justify-content: center; border: 1px solid #b5b5b5; background: #fdfdfd; color: #666; }
.gap { background: #dadad9; }
.knob { background: #fff; border: 1px solid #ababab; }
.lbar { padding-bottom: 2px; }
.lbar .g1 { flex: 145; }
.lbar .knob { flex: 358; }
.lbar .g2 { flex: 93; }
.rbar { padding-bottom: 22px; }
.rbar .g1 { flex: 295; }
.rbar .knob { flex: 42; }
.rbar .g2 { flex: 168; }
.bar .jump { border: 0; background: none; height: 17px; }
.editor { flex: 1; min-width: 0; display: flex; flex-direction: column; }
.work { flex: 1; min-height: 0; display: flex; }
.canvas { position: relative; flex: 1; padding: 25px 21px 0 23px; }
.pointer { position: absolute; left: 222px; top: 164px; }
.notes { height: 36px; margin: 0; padding: 0 11px 4px; border: 0; border-top: 1px solid #b9b9b9; background: #e5e5e5; font-family: inherit; font-size: 15px; outline: 0; }
.notes::placeholder { color: #555; opacity: 1; }

.slide { display: flex; flex-direction: column; aspect-ratio: 962 / 542; border: 1px solid #c3c3c3; background: #fff; color: #000; padding-top: 40px; }
.shead { display: flex; align-items: baseline; justify-content: space-between; padding: 0 24px 0 43px; font-size: 14px; font-weight: 300; white-space: nowrap; }
.shead h1 { margin: 0 6px 0 0; font-size: 24px; line-height: 36px; font-weight: 700; }
.shead .act { font-weight: 700; }
.cols { display: grid; grid-template-columns: 236fr 238fr 239fr; gap: 61px; padding: 0 59px 0 65px; margin-top: 174px; }
.cols h2 { margin: 0 0 26px; font-size: 28px; line-height: 40px; font-weight: 700; text-align: center; }
.cols p { margin: 0; font-size: 20px; line-height: 32px; font-weight: 300; text-align: justify; text-justify: inter-character; }
.logo { display: flex; align-items: center; gap: 6px; margin: auto 41px 28px auto; font-family: "Liberation Sans", "Noto Sans CJK SC", sans-serif; }
.logo div { display: flex; flex-direction: column; }
.uni { font-size: 16px; line-height: 19px; font-style: italic; }
.school { padding-left: 3px; font-size: 14px; line-height: 17px; font-weight: 700; color: #3b7fb6; }

.status { display: flex; align-items: center; height: 21px; border-top: 1px solid #c3c3c3; background: #f3f3f3; padding: 0 0 1px 3px; }
.spell { margin: 0 16px 0 24px; }
.nbtn { gap: 5px; margin: 0 19px 0 auto; }
.view { width: 38px; height: 20px; justify-content: center; }
.view.on { background: #c6c6c6; }
.pm { position: relative; width: 7px; height: 10px; justify-content: center; }
.pm::before { content: ""; width: 7px; height: 2px; background: #666; }
.plusb::after { content: ""; position: absolute; width: 2px; height: 7px; background: #666; }
.minus { margin: 0 4px; }
.range { appearance: none; width: 100px; height: 12px; margin: 0 3px 0 0; background: linear-gradient(#aaa, #aaa) center / 100% 1px no-repeat, linear-gradient(#aaa, #aaa) center / 1px 5px no-repeat; }
.range::-webkit-slider-thumb { appearance: none; width: 5px; height: 11px; background: #666; }
.pct { width: 39px; margin-left: 12px; }
.fit { margin-right: 16px; }
</style>
